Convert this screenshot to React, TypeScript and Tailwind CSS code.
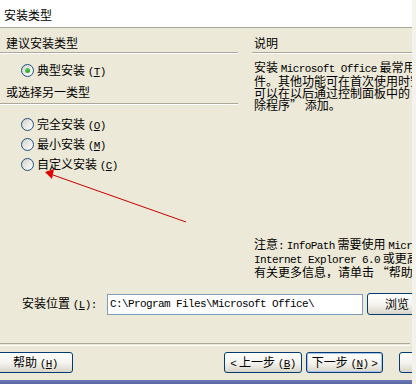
import type { ReactNode } from "react"

const M = ({ children }: { children: ReactNode }) => (
  <span className="font-['Liberation_Mono',monospace] text-[11px] tracking-[-0.6px]">{children}</span>
)

const Key = ({ k }: { k: string }) => (
  <M>
    (<span className="underline">{k}</span>)
  </M>
)

function Radio({ checked = false, label, k }: { checked?: boolean; label: string; k: string }) {
  return (
    <div className="flex items-center gap-[3px] pl-[21px] h-[13px]">
      <span className="w-[13px] h-[13px] rounded-full border border-[#1c5180] bg-gradient-to-br from-[#d4d3cb] to-white flex items-center justify-center shrink-0">
        {checked && <span className="w-[5px] h-[5px] rounded-full bg-gradient-to-br from-[#62d962] to-[#1a9a1a]" />}
      </span>
      <span className="leading-[12px] whitespace-nowrap">
        {label} <Key k={k} />
      </span>
    </div>
  )
}

function XpButton({ children, primary = false, className = "" }: { children: ReactNode; primary?: boolean; className?: string }) {
  return (
    <div
      className={`h-[21px] shrink-0 rounded-[3px] border border-[#003c74] bg-gradient-to-b from-white via-[#f5f4ef] to-[#d9d5c9] flex items-center justify-center leading-[12px] whitespace-nowrap ${
        primary ? "shadow-[inset_0_0_0_1px_#a9c2f2]" : ""
      } ${className}`}
    >
      {children}
    </div>
  )
}

export default function App() {
  return (
    <div className="w-[416px] h-[384px] overflow-hidden relative flex bg-[#ece9d8] text-[12px] text-black font-['Noto_Sans_CJK_SC',sans-serif]">
      <div className="w-[412px] shrink-0 flex flex-col">
        {/* Title strip */}
        <div className="h-[28px] shrink-0 bg-white border-b border-[#aca899] pl-[4px] pt-[9px] leading-[12px]">安装类型</div>

        {/* Two columns */}
        <div className="h-[255px] shrink-0 flex">
          <div className="w-[238px] shrink-0 flex flex-col">
            <div className="h-[25px] pt-[9px] pl-[6px] leading-[12px] border-b border-[#aca899] shadow-[0_1px_0_#fff]">建议安装类型</div>
            <div className="mt-[11px]">
              <Radio checked label="典型安装" k="T" />
            </div>
            <div className="mt-[9px] h-[18px] pl-[6px] leading-[12px] border-b border-[#aca899] shadow-[0_1px_0_#fff]">或选择另一类型</div>
            <div className="mt-[14px] flex flex-col gap-[7px]">
              <Radio label="完全安装" k="O" />
              <Radio label="最小安装" k="M" />
              <Radio label="自定义安装" k="C" />
            </div>
          </div>

          <div className="ml-[14px] flex-1 min-w-0 flex flex-col">
            <div className="h-[25px] pt-[9px] pl-[2px] leading-[12px] border-b border-[#aca899] shadow-[0_1px_0_#fff]">说明</div>
            <div className="mt-[8px] pl-[2px] leading-[12px] overflow-hidden">
              <div className="whitespace-nowrap">
                安装 <M>Microsoft Office</M> 最常用的组
              </div>
              <div className="whitespace-nowrap">件。其他功能可在首次使用时安装，或</div>
              <div className="whitespace-nowrap">可以在以后通过控制面板中的“添加/删</div>
              <div className="whitespace-nowrap">除程序” 添加。</div>
            </div>
            <div className="mt-[127px] pl-[2px] leading-[12px] overflow-hidden">
              <div className="whitespace-nowrap">
                注意<M>:</M> <M>InfoPath</M> 需要使用 <M>Microsoft</M>
              </div>
              <div className="whitespace-nowrap">
                <M>Internet Explorer 6.0</M> 或更高版本。
              </div>
              <div className="whitespace-nowrap">有关更多信息，请单击 “帮助”。</div>
            </div>
          </div>
        </div>

        {/* Install location */}
        <div className="mt-[10px] h-[22px] shrink-0 flex items-center">
          <div className="w-[107px] pl-[22px] shrink-0 leading-[12px] whitespace-nowrap">
            安装位置 <Key k="L" />
            <M>:</M>
          </div>
          <div className="w-[256px] h-[21px] shrink-0 bg-white border border-[#7f9db9] pl-[2px] flex items-center whitespace-nowrap overflow-hidden">
            <M>C:\Program Files\Microsoft Office\</M>
          </div>
          <XpButton className="ml-[4px] w-[52px] h-[22px] !justify-start pl-[17px]">浏览</XpButton>
        </div>

        {/* Separator */}
        <div className="mt-[28px] h-[2px] shrink-0 border-t border-[#aca899] shadow-[0_1px_0_#fff] w-[410px]" />

        {/* Buttons */}
        <div className="mt-[7px] h-[21px] shrink-0 flex items-center">
          <XpButton className="ml-[-4px] w-[77px] !justify-start pl-[16px]">
            <span>
              帮助 <Key k="H" />
            </span>
          </XpButton>
          <XpButton className="ml-[151px] w-[78px]">
            <span>
              <M>&lt;</M> 上一步 <Key k="B" />
            </span>
          </XpButton>
          <XpButton primary className="ml-[4px] w-[77px]">
            <span>
              下一步 <Key k="N" /> <M>&gt;</M>
            </span>
          </XpButton>
          <XpButton className="ml-[16px] w-[77px]">取消</XpButton>
        </div>

        <div className="mt-[7px] h-[6px] shrink-0 bg-gradient-to-b from-[#6f7bb5] to-[#4e5a99]" />
      </div>

      {/* Right edge of the capture */}
      <div className="flex-1 bg-[#f3f2ec]" />

      {/* Red annotation arrow */}
      <svg className="absolute inset-0 pointer-events-none" width="416" height="384" viewBox="0 0 416 384">
        <line x1="186" y1="222" x2="53" y2="175" stroke="#c80000" strokeWidth="1" />
        <polygon points="45,172 54,169 52,179" fill="#e10000" />
      </svg>
    </div>
  )
}
